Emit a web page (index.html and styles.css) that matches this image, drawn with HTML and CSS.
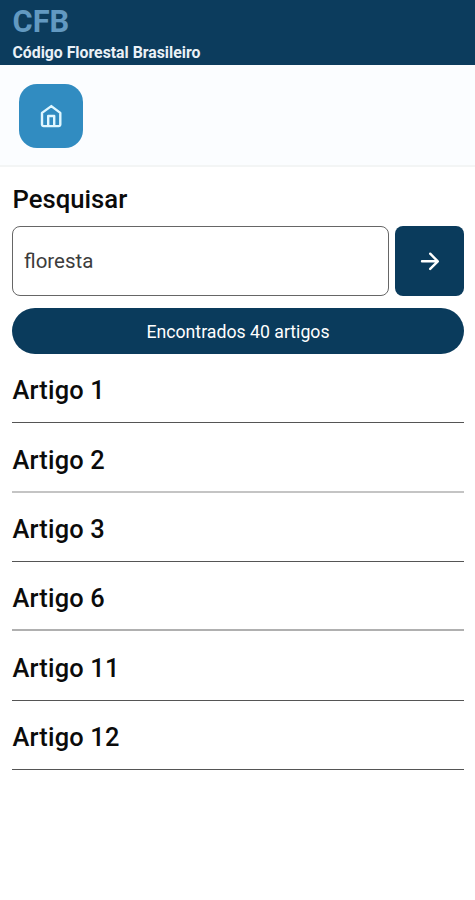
FILE: index.html
```html
<!DOCTYPE html>
<html lang="pt-BR">
<head>
<meta charset="utf-8">
<title>CFB</title>
<link rel="stylesheet" href="styles.css">
</head>
<body>
<header class="header">
  <div class="brand">CFB</div>
  <div class="subtitle">Código Florestal Brasileiro</div>
</header>
<nav class="toolbar">
  <a class="home" aria-label="Início">
    <svg width="22" height="24" viewBox="0 0 22 24"><path d="M2 8.900 11.300 2.100l9 6.800V20.500a1.600 1.600 0 0 1-1.600 1.600H3.600A1.600 1.600 0 0 1 2 20.500zM8.200 22.100V12h6v10.100"/></svg>
  </a>
</nav>
<main class="content">
  <h1 class="title">Pesquisar</h1>
  <div class="search">
    <div class="field">floresta</div>
    <button class="go" aria-label="Buscar">
      <svg width="20" height="20" viewBox="0 0 20 20"><path d="M2 10.3h15.500M10.200 2.700 17.800 10.300l-7.600 7.600"/></svg>
    </button>
  </div>
  <div class="count">Encontrados 40 artigos</div>
  <ul class="list">
    <li>Artigo 1</li>
    <li class="soft">Artigo 2</li>
    <li>Artigo 3</li>
    <li class="mid">Artigo 6</li>
    <li>Artigo 11</li>
    <li>Artigo 12</li>
  </ul>
</main>
</body>
</html>
```
FILE: styles.css
```css
* { box-sizing: border-box; }
body { margin: 0; min-height: 900px; background: #fff; color: #0b0b0b; font-family: Roboto, sans-serif; }
.header { height: 65px; padding: 4px 12.5px 0; background: #0c3c5d; }
.brand { font-size: 30.8px; line-height: 36px; font-weight: 700; color: #6299c1; }
.subtitle { margin-top: 3px; font-size: 15.8px; line-height: 20px; font-weight: 700; color: #eaf1f7; }
.toolbar { height: 102px; padding: 19px; background: #fbfdff; border-bottom: 2px solid #f3f5f5; }
.home { display: flex; width: 64px; height: 64px; align-items: center; justify-content: center; border-radius: 18px; background: #318cc1; }
svg { display: block; fill: none; stroke: #fff; stroke-width: 2.4; stroke-linecap: round; stroke-linejoin: round; }
.home svg { stroke: #e0f7ff; }
.content { padding: 17px 11px 0 12px; }
.title { margin: 0; padding-left: .5px; font-size: 25.7px; line-height: 30px; font-weight: 500; }
.search { display: flex; gap: 6px; margin-top: 12px; height: 70px; }
.field { flex: 1; display: flex; align-items: center; padding-left: 11px; border: 1px solid #666; border-radius: 8px; font-size: 20.5px; color: #3c3c3c; }
.go { display: flex; width: 69px; padding: 0; align-items: center; justify-content: center; border: 0; border-radius: 8px; background: #0a3b5c; }
.count { margin-top: 12px; height: 46px; border-radius: 23px; background: #0a3b5c; color: #fff; font-size: 17.7px; line-height: 48px; text-align: center; }
.list { margin: 0; padding: 0; list-style: none; }
.list li { height: 69.33px; padding: 20.2px 0 0 .5px; border-bottom: 1px solid #555; font-size: 25.4px; line-height: 32px; font-weight: 500; letter-spacing: .2px; }
.list .soft { border-bottom: 2px solid #c4c4c4; }
.list .mid { border-bottom: 2px solid #b0b0b0; }
```
